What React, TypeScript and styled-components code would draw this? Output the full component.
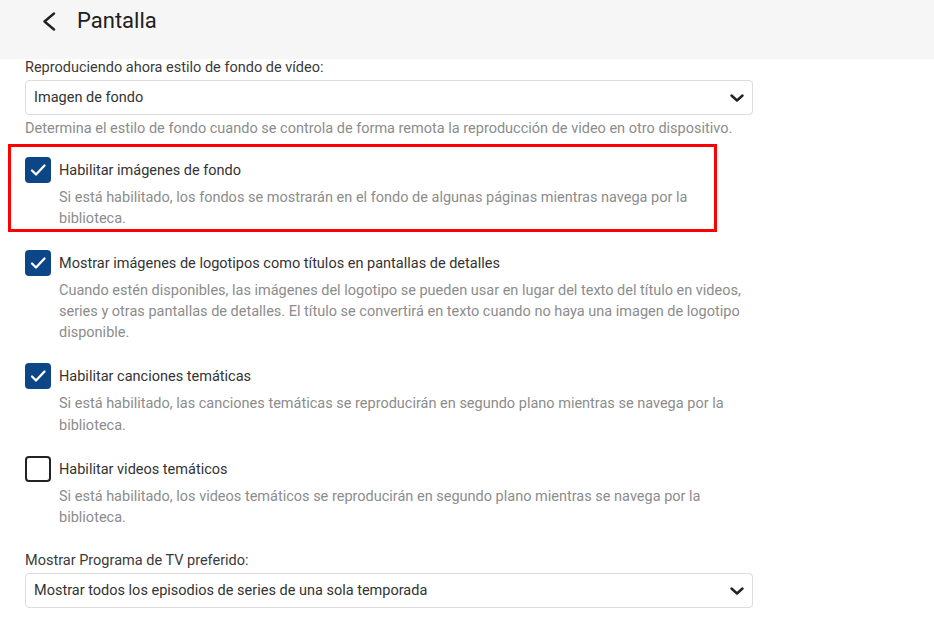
import React from "react";
import styled, { createGlobalStyle } from "styled-components";

const Global = createGlobalStyle`
  html, body { margin: 0; padding: 0; background: #ffffff; }
  body { font-family: Roboto, "Noto Sans", "Liberation Sans", sans-serif; color: #333; }
  *, *::before, *::after { box-sizing: border-box; }
`;

const Page = styled.div`
  width: 934px;
  min-height: 626px;
  display: flex;
  flex-direction: column;
`;

const Header = styled.header`
  height: 59px;
  background: #f6f6f6;
  display: flex;
  align-items: flex-start;
  padding: 8px 0 0 40px;
  gap: 19px;
`;

const BackButton = styled.button`
  border: 0;
  background: none;
  padding: 0;
  margin-top: 4px;
  width: 18px;
  height: 20px;
  display: flex;
  cursor: pointer;
`;

const Title = styled.h1`
  margin: 0;
  font-size: 22px;
  font-weight: 400;
  color: #202020;
  line-height: 26px;
`;

const Content = styled.main`
  width: 753px;
  padding: 0 0 0 25px;
  display: flex;
  flex-direction: column;
`;

const Field = styled.div<{ $top: number }>`
  display: flex;
  flex-direction: column;
  margin-top: ${(p) => p.$top}px;
`;

const FieldLabel = styled.label`
  font-size: 14.5px;
  line-height: 17px;
  color: #3a3a3a;
  margin-bottom: 4px;
`;

const SelectBox = styled.div`
  height: 35px;
  border: 1px solid #dcdcdc;
  border-radius: 4px;
  display: flex;
  align-items: center;
  justify-content: space-between;
  padding: 0 8px 0 8px;
  font-size: 14.5px;
  color: #333;
  background: #fff;
`;

const HelpText = styled.div`
  font-size: 14.5px;
  line-height: 21.5px;
  color: #8c8c8c;
  margin-top: 3px;
`;

const CheckBlock = styled.div<{ $top: number; $highlight?: boolean }>`
  position: relative;
  margin-top: ${(p) => p.$top}px;
  display: flex;
  flex-direction: column;
  ${(p) =>
    p.$highlight &&
    `
    &::after {
      content: "";
      position: absolute;
      left: -17px;
      top: -13px;
      width: 709px;
      height: 88px;
      border: 3.5px solid #ff0000;
      pointer-events: none;
    }
  `}
`;

const CheckRow = styled.div`
  display: flex;
  align-items: center;
  gap: 8px;
  height: 26px;
`;

const Box = styled.span<{ $checked: boolean }>`
  width: 26px;
  height: 26px;
  border-radius: 4px;
  flex: none;
  display: flex;
  align-items: center;
  justify-content: center;
  background: ${(p) => (p.$checked ? "#0c4687" : "#fff")};
  border: ${(p) => (p.$checked ? "none" : "2px solid #222")};
`;

const CheckLabel = styled.span`
  font-size: 14.5px;
  color: #333;
  margin-top: 1px;
`;

const Description = styled.div`
  margin: 4px 0 0 34px;
  font-size: 14.5px;
  line-height: 21.3px;
  color: #8c8c8c;
`;

const Chevron = () => (
  <svg width="14" height="10" viewBox="0 0 14 10">
    <path d="M1.5 2.5 L7 7.5 L12.5 2.5" fill="none" stroke="#222" strokeWidth="2.4" strokeLinecap="round" strokeLinejoin="round" />
  </svg>
);

const Check = () => (
  <svg width="18" height="18" viewBox="0 0 18 18">
    <path d="M3 9.5 L7 13.5 L15.5 4.5" fill="none" stroke="#fff" strokeWidth="2.3" strokeLinecap="round" strokeLinejoin="round" />
  </svg>
);

type Item = { label: string; desc: string; checked: boolean; top: number; highlight?: boolean };

const items: Item[] = [
  {
    label: "Habilitar imágenes de fondo",
    desc: "Si está habilitado, los fondos se mostrarán en el fondo de algunas páginas mientras navega por la biblioteca.",
    checked: true,
    top: 17,
    highlight: true,
  },
  {
    label: "Mostrar imágenes de logotipos como títulos en pantallas de detalles",
    desc: "Cuando estén disponibles, las imágenes del logotipo se pueden usar en lugar del texto del título en videos, series y otras pantallas de detalles. El título se convertirá en texto cuando no haya una imagen de logotipo disponible.",
    checked: true,
    top: 20.5,
  },
  {
    label: "Habilitar canciones temáticas",
    desc: "Si está habilitado, las canciones temáticas se reproducirán en segundo plano mientras se navega por la biblioteca.",
    checked: true,
    top: 20,
  },
  {
    label: "Habilitar videos temáticos",
    desc: "Si está habilitado, los videos temáticos se reproducirán en segundo plano mientras se navega por la biblioteca.",
    checked: false,
    top: 20,
  },
];

export default function App() {
  return (
    <Page>
      <Global />
      <Header>
        <BackButton aria-label="Atrás">
          <svg width="18" height="20" viewBox="0 0 18 20">
            <path d="M14 1.5 L4.5 9.5 L14 17.5" fill="none" stroke="#222" strokeWidth="2.4" strokeLinecap="round" strokeLinejoin="round" />
          </svg>
        </BackButton>
        <Title>Pantalla</Title>
      </Header>
      <Content>
        <Field $top={0}>
          <FieldLabel>Reproduciendo ahora estilo de fondo de vídeo:</FieldLabel>
          <SelectBox>
            <span>Imagen de fondo</span>
            <Chevron />
          </SelectBox>
          <HelpText>
            Determina el estilo de fondo cuando se controla de forma remota la reproducción de video en otro dispositivo.
          </HelpText>
        </Field>
        {items.map((it) => (
          <CheckBlock key={it.label} $top={it.top} $highlight={it.highlight}>
            <CheckRow>
              <Box $checked={it.checked}>{it.checked && <Check />}</Box>
              <CheckLabel>{it.label}</CheckLabel>
            </CheckRow>
            <Description>{it.desc}</Description>
          </CheckBlock>
        ))}
        <Field $top={23.5}>
          <FieldLabel>Mostrar Programa de TV preferido:</FieldLabel>
          <SelectBox>
            <span>Mostrar todos los episodios de series de una sola temporada</span>
            <Chevron />
          </SelectBox>
        </Field>
      </Content>
    </Page>
  );
}
